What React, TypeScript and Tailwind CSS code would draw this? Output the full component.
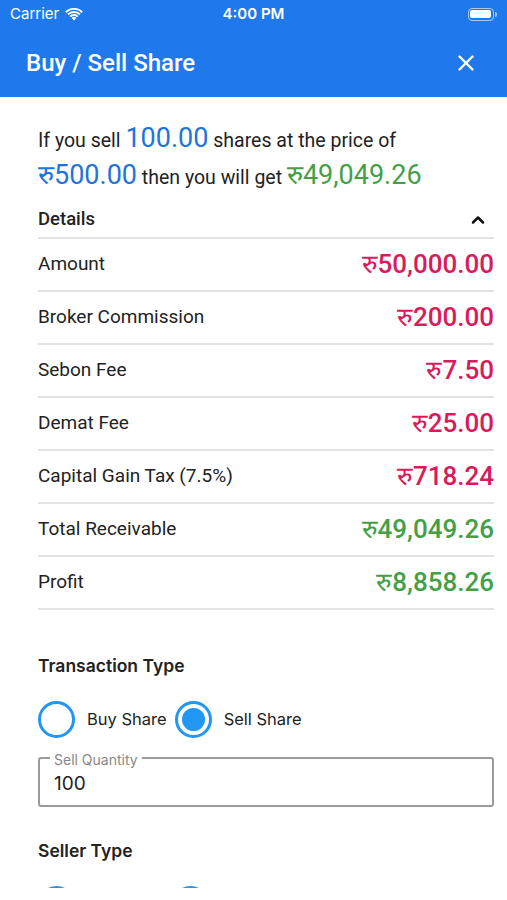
import { X, ChevronUp } from 'lucide-react'

const rows = [
  { label: 'Amount', value: 'रु50,000.00', tone: 'red' },
  { label: 'Broker Commission', value: 'रु200.00', tone: 'red' },
  { label: 'Sebon Fee', value: 'रु7.50', tone: 'red' },
  { label: 'Demat Fee', value: 'रु25.00', tone: 'red' },
  { label: 'Capital Gain Tax (7.5%)', value: 'रु718.24', tone: 'red' },
  { label: 'Total Receivable', value: 'रु49,049.26', tone: 'green' },
  { label: 'Profit', value: 'रु8,858.26', tone: 'green' },
]

function Radio({ checked, label }: { checked?: boolean; label: string }) {
  return (
    <div className="flex items-center">
      <div className="w-[37px] h-[37px] rounded-full border-[3px] border-[#2196f3] flex items-center justify-center">
        {checked && <div className="w-[23px] h-[23px] rounded-full bg-[#2196f3]" />}
      </div>
      <span className="ml-[12px] text-[16.5px] text-[#222] font-['Inter',sans-serif]">{label}</span>
    </div>
  )
}

function StatusBar() {
  return (
    <div className="h-[28px] flex items-center justify-between px-[10px] text-white text-[15px] font-['Inter',sans-serif]">
      <div className="flex items-center gap-[6px] w-[120px]">
        <span>Carrier</span>
        <svg width="18" height="13" viewBox="0 0 18 13" fill="white">
          <path d="M9 12.5 6.6 10a3.4 3.4 0 0 1 4.8 0Z" />
          <path d="M4.5 7.9a6.4 6.4 0 0 1 9 0l-1.4 1.4a4.4 4.4 0 0 0-6.2 0Z" />
          <path d="M2.3 5.7a9.5 9.5 0 0 1 13.4 0l-1.4 1.4a7.5 7.5 0 0 0-10.6 0Z" />
          <path d="M0.1 3.5a12.6 12.6 0 0 1 17.8 0l-1.4 1.4a10.6 10.6 0 0 0-15 0Z" />
        </svg>
      </div>
      <span className="font-semibold text-[15px]">4:00 PM</span>
      <div className="w-[120px] flex justify-end">
        <div className="flex items-center">
          <div className="w-[26px] h-[13px] rounded-[4px] border border-white/60 p-[1.5px]">
            <div className="w-full h-full rounded-[2px] bg-white" />
          </div>
          <div className="w-[2px] h-[5px] bg-white/60 rounded-r-sm ml-[1px]" />
        </div>
      </div>
    </div>
  )
}

export default function App() {
  return (
    <div className="w-[507px] h-[900px] overflow-hidden bg-white font-['Roboto',sans-serif]">
      <div className="bg-[#2079ec] h-[97px] flex flex-col">
        <StatusBar />
        <div className="flex-1 flex items-center justify-between pl-[26px] pr-[28px]">
          <h1 className="text-white text-[24px] font-medium">Buy / Sell Share</h1>
          <X className="text-white" size={26} strokeWidth={2.2} />
        </div>
      </div>

      <div className="h-[791px] overflow-hidden pl-[38px]">
        <div className="w-[456px]">
          <p className="mt-[24px] text-[19.5px] leading-[34px] text-[#222]">
            If you sell <span className="text-[27px] text-[#1f74dc]">100.00</span> shares at the price of{' '}
            <span className="text-[27px] text-[#1f74dc]">रु500.00</span> then you will get{' '}
            <span className="text-[27px] text-[#43a047]">रु49,049.26</span>
          </p>

          <div className="mt-[3px] h-[41px] pt-[4px] flex items-center justify-between border-b-2 border-[#e3e3e3]">
            <span className="text-[18.5px] font-medium text-[#222]">Details</span>
            <ChevronUp size={20} strokeWidth={3} className="text-[#111] mr-[6px]" />
          </div>

          {rows.map((r) => (
            <div key={r.label} className="h-[53px] flex items-center justify-between border-b-2 border-[#e3e3e3]">
              <span className="text-[19px] text-[#222]">{r.label}</span>
              <span className={`text-[26px] font-medium ${r.tone === 'red' ? 'text-[#d81b5a]' : 'text-[#43a047]'}`}>
                {r.value}
              </span>
            </div>
          ))}

          <h2 className="mt-[43px] text-[17.5px] font-semibold text-[#222] font-['Inter',sans-serif]">Transaction Type</h2>

          <div className="mt-[22px] flex items-center gap-[8px]">
            <Radio label="Buy Share" />
            <Radio checked label="Sell Share" />
          </div>

          <div className="relative mt-[19px] h-[50px] border-2 border-[#9a9a9a] rounded-[3px] flex items-center pl-[14px]">
            <span className="absolute -top-[10px] left-[10px] bg-white px-[4px] text-[14px] text-[#888] font-['Inter',sans-serif]">
              Sell Quantity
            </span>
            <span className="text-[19px] text-[#222] mt-[4px] font-['Inter',sans-serif]">100</span>
          </div>

          <h2 className="mt-[31px] text-[17.5px] font-semibold text-[#222] font-['Inter',sans-serif]">Seller Type</h2>

          <div className="mt-[21px] flex items-center gap-[97px]">
            <div className="w-[37px] h-[37px] rounded-full border-[3px] border-[#2196f3]" />
            <div className="w-[37px] h-[37px] rounded-full border-[3px] border-[#2196f3]" />
          </div>
        </div>
      </div>
    </div>
  )
}
